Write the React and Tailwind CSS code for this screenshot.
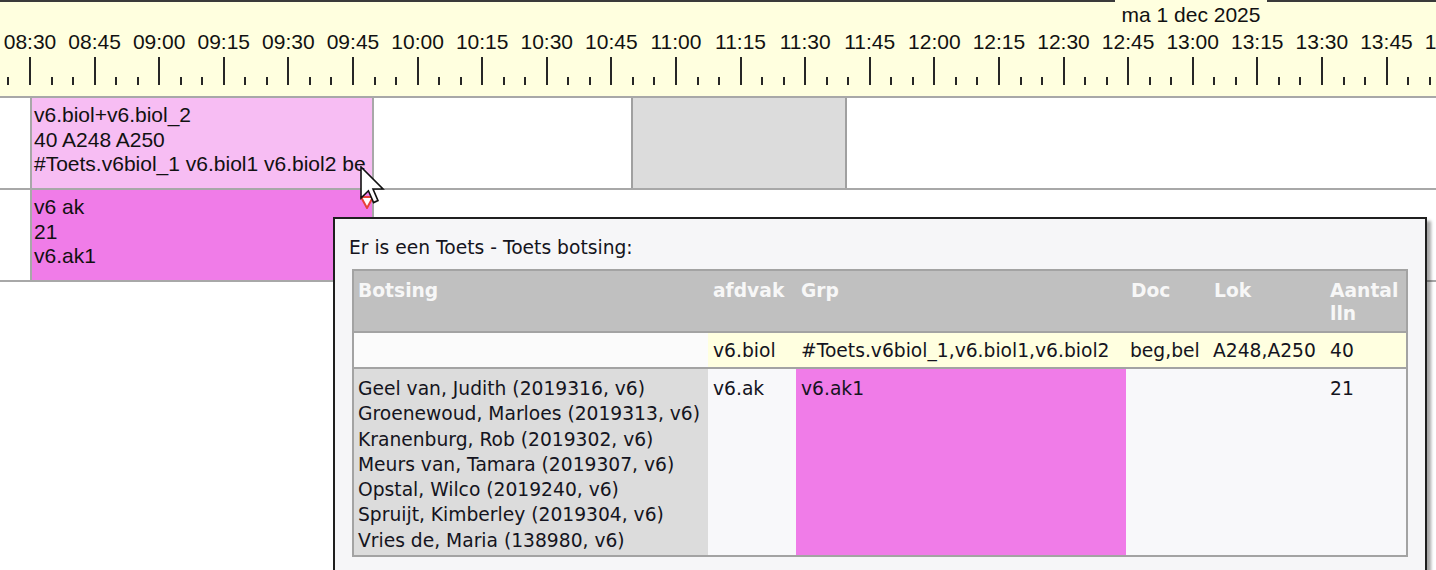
import React from 'react'

const SLOT = 64.6

const times = []
for (let i = 0; i < 23; i++) {
    const m = 8 * 60 + 30 + i * 15
    const hh = String(Math.floor(m / 60)).padStart(2, '0')
    const mm = String(m % 60).padStart(2, '0')
    times.push(`${hh}:${mm}`)
}

// ruler ticks: a long tick on every quarter, two short ones in between
const Ruler = () => {
    const ticks = []
    for (let i = -1; i < 23; i++) {
        const x = 30 + i * SLOT
        ticks.push(<rect key={`l${i}`} x={Math.round(x) - 1} y={3} width={2} height={28} fill="#262626" />)
        ticks.push(<rect key={`a${i}`} x={Math.round(x + SLOT / 3) - 1} y={23} width={2} height={8} fill="#262626" />)
        ticks.push(<rect key={`b${i}`} x={Math.round(x + (2 * SLOT) / 3) - 1} y={23} width={2} height={8} fill="#262626" />)
    }
    return (
        <svg width="1436" height="32" className="block" shapeRendering="crispEdges">
            {ticks}
        </svg>
    )
}

const students = [
    'Geel van, Judith (2019316, v6)',
    'Groenewoud, Marloes (2019313, v6)',
    'Kranenburg, Rob (2019302, v6)',
    'Meurs van, Tamara (2019307, v6)',
    'Opstal, Wilco (2019240, v6)',
    'Spruijt, Kimberley (2019304, v6)',
    'Vries de, Maria (138980, v6)',
]

const Popup = () => {
    const head = 'bg-[#c0c0c0] h-[62px] border-b-2 border-[#a3a3a3] pl-[5px] pt-[8px] font-bold text-[#f7f7f7] leading-[23px]'
    const r1 = 'h-[36px] border-b-2 border-[#a3a3a3] pl-[5px] pt-[6px] leading-[24px] whitespace-nowrap'
    const r2 = 'h-[186px] pl-[5px] pt-[7px] leading-[25.3px] whitespace-nowrap'

    return (
        <div className="absolute left-[333px] top-[217px] w-[1094px] h-[380px] bg-[#f6f6f8] border-2 border-[#1f1f1f] shadow-[4px_4px_3px_rgba(0,0,0,0.35)] pl-[17px] pt-[17px] font-['DejaVu_Sans',sans-serif] text-[18.7px] text-[#141420]">
            <div className="-ml-[3px] leading-[24px]">Er is een Toets - Toets botsing:</div>
            <div className="mt-[9px] w-[1056px] border-2 border-[#a3a3a3] grid grid-cols-[354px_88px_330px_83px_117px_80px]">
                {/* header */}
                <div className={`${head} !pl-[4px]`}>Botsing</div>
                <div className={head}>afdvak</div>
                <div className={head}>Grp</div>
                <div className={head}>Doc</div>
                <div className={head}>Lok</div>
                <div className={`${head} !pl-[4px]`}>Aantal lln</div>

                {/* row 1 */}
                <div className={`${r1} bg-[#fbfbfb]`}></div>
                <div className={`${r1} bg-[#ffffe0]`}>v6.biol</div>
                <div className={`${r1} bg-[#ffffe0]`}>#Toets.v6biol_1,v6.biol1,v6.biol2</div>
                <div className={`${r1} bg-[#ffffe0] !pl-[4px]`}>beg,bel</div>
                <div className={`${r1} bg-[#ffffe0] !pl-[4px]`}>A248,A250</div>
                <div className={`${r1} bg-[#ffffe0] !pl-[4px]`}>40</div>

                {/* row 2 */}
                <div className={`${r2} bg-[#dcdcdc] !pl-[4px]`}>
                    {students.map((s) => (
                        <div key={s}>{s}</div>
                    ))}
                </div>
                <div className={`${r2} bg-[#f8f8fa]`}>v6.ak</div>
                <div className={`${r2} bg-[#f07ce8]`}>v6.ak1</div>
                <div className={`${r2} bg-[#f8f8fa]`}></div>
                <div className={`${r2} bg-[#f8f8fa]`}></div>
                <div className={`${r2} bg-[#f8f8fa] !pl-[4px]`}>21</div>
            </div>
        </div>
    )
}

const App = () => {
    return (
        <div className="relative w-[1436px] h-[570px] overflow-hidden bg-white font-['Liberation_Sans',Arial,sans-serif] text-[21px] text-[#111]">
            {/* timeline header */}
            <div className="h-[98px] bg-[#ffffdf] border-b-2 border-[#a8a8a8] flex flex-col">
                <div className="flex items-start h-[30px]">
                    <div className="flex-1 h-[2px] bg-[#3a3a3a]"></div>
                    <div className="w-[152px] pt-[3px] text-center leading-[24px]">ma 1 dec 2025</div>
                    <div className="w-[169px] h-[2px] bg-[#3a3a3a]"></div>
                </div>
                <div className="flex h-[24px] leading-[24px] -ml-[2.3px]">
                    {times.map((t) => (
                        <div key={t} className="w-[64.6px] shrink-0 text-center whitespace-nowrap">{t}</div>
                    ))}
                </div>
                <Ruler />
            </div>

            {/* row 1 */}
            <div className="h-[92px] border-b-2 border-[#a8a8a8] flex">
                <div className="ml-[30px] w-[344px] shrink-0 bg-[#f7bdf3] border-x-2 border-[#a8a8a8] pl-[2px] pt-[5px] leading-[24.5px] overflow-hidden whitespace-nowrap">
                    <div>v6.biol+v6.biol_2</div>
                    <div>40 A248 A250</div>
                    <div>#Toets.v6biol_1 v6.biol1 v6.biol2 be</div>
                </div>
                <div className="ml-[257px] w-[216px] shrink-0 bg-[#dcdcdc] border-x-2 border-[#a0a0a0]"></div>
            </div>

            {/* row 2 */}
            <div className="h-[92px] border-b-2 border-[#a8a8a8] flex">
                <div className="ml-[30px] w-[344px] shrink-0 bg-[#f07ce8] border-x-2 border-[#a8a8a8] pl-[2px] pt-[5px] leading-[24.5px] overflow-hidden whitespace-nowrap">
                    <div>v6 ak</div>
                    <div>21</div>
                    <div>v6.ak1</div>
                </div>
            </div>

            {/* conflict marker on the block corner */}
            <svg className="absolute left-[359px] top-[195px]" width="16" height="16" viewBox="0 0 16 16">
                <path d="M2 2 L14 2 L8 13 Z" fill="#fff" stroke="#e8413a" strokeWidth="2" strokeLinejoin="round" />
            </svg>

            <Popup />

            {/* mouse pointer */}
            <svg className="absolute left-[360px] top-[166px]" width="26" height="38" viewBox="0 0 13 19">
                <path d="M0.5 0.5 L0.5 16 L4.2 12.4 L6.8 18.3 L9 17.3 L6.5 11.5 L11.5 11.5 Z" fill="#fff" stroke="#111" strokeWidth="0.8" strokeLinejoin="miter" />
            </svg>
        </div>
    )
}

export default App
